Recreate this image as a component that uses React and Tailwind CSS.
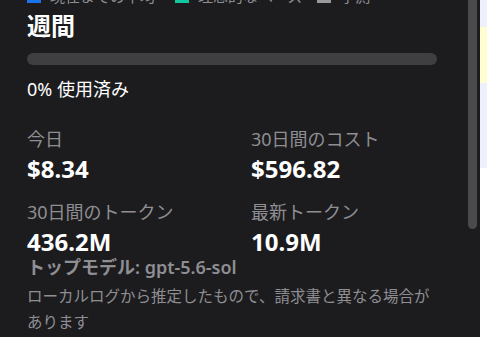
// Weekly usage panel (dark) with a scroll thumb and a sliver of the page beside it
const stats = [
  { label: '今日', value: '$8.34' },
  { label: '30日間のコスト', value: '$596.82' },
  { label: '30日間のトークン', value: '436.2M' },
  { label: '最新トークン', value: '10.9M' },
]

const legend = [
  { label: '現在までの平均', color: 'bg-[#1a73e8]', gap: 'mr-[20px]' },
  { label: '理想的なペース', color: 'bg-[#10c9a0]', gap: 'mr-[15px]' },
  { label: '予測', color: 'bg-[#9a9a9e]', gap: '' },
]

const font = { fontFamily: '"Noto Sans", "Noto Sans CJK JP", sans-serif' }

export default function App() {
  return (
    <div className="flex h-[337px] w-[487px] overflow-hidden bg-[#1c1c1e]" style={font}>
      {/* ── PANEL ───────────────────────────────────────── */}
      <div className="flex w-[480px] shrink-0">
        <div className="w-[468px] shrink-0 pl-[27px] pr-[31px]">
          {/* legend, cut off at the top */}
          <div className="mt-[-15px] flex h-[22px] items-center whitespace-nowrap text-[15px] leading-[22px] text-[#8e8e93]">
            {legend.map((l) => (
              <div key={l.label} className={`flex items-center gap-[9px] ${l.gap}`}>
                <span className={`h-[14px] w-[14px] ${l.color}`} />
                <span>{l.label}</span>
              </div>
            ))}
          </div>

          <h2 className="mt-[3px] text-[24px] font-bold leading-[32px] text-white">週間</h2>

          <div className="mt-[11px] h-[12px] rounded-full bg-[#3f3f42]" />

          <p className="mt-[11px] text-[18px] leading-[26px] text-white">0% 使用済み</p>

          <div className="mt-[24px] grid grid-cols-[224px_1fr] gap-y-[16px]">
            {stats.map((s) => (
              <div key={s.label}>
                <div className="text-[18px] leading-[26px] text-[#8e8e93]">{s.label}</div>
                <div className="mt-[3px] text-[24px] font-bold leading-[28px] text-white">{s.value}</div>
              </div>
            ))}
          </div>

          <p className="mt-[-2px] text-[18px] font-semibold leading-[26px] text-[#8e8e93]">
            トップモデル: gpt-5.6-sol
          </p>
          <p className="mt-[3px] text-[15.5px] leading-[26px] text-[#8e8e93]">
            ローカルログから推定したもので、請求書と異なる場合があります
          </p>
        </div>

        {/* scroll thumb */}
        <div className="w-[12px] shrink-0">
          <div className="h-[229px] w-[9px] rounded-b-full bg-[#4a4a4d]" />
        </div>
      </div>

      {/* ── PAGE SLIVER ─────────────────────────────────── */}
      <div className="flex w-[7px] flex-col">
        <div className="h-[27px] bg-[#eef1fd]" />
        <div className="h-[56px] bg-[#fffdd2]" />
        <div className="h-[85px] bg-[#eef1fd]" />
        <div className="flex-1 bg-white" />
      </div>
    </div>
  )
}
